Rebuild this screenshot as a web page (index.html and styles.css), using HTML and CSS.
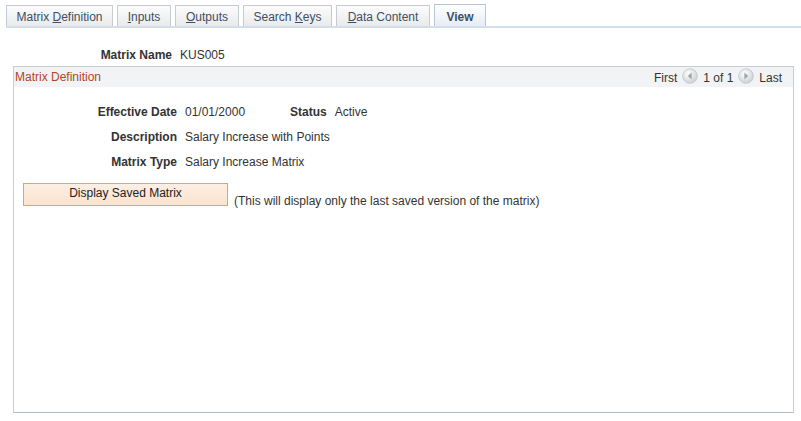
FILE: index.html
```html
<!DOCTYPE html>
<html>
<head>
<meta charset="utf-8">
<link rel="stylesheet" href="styles.css">
</head>
<body>
<div class="tabs">
  <div class="tab t1"><span>Matrix <u>D</u>efinition</span></div>
  <div class="tab t2"><span><u>I</u>nputs</span></div>
  <div class="tab t3"><span><u>O</u>utputs</span></div>
  <div class="tab t4"><span>Search <u>K</u>eys</span></div>
  <div class="tab t5"><span><u>D</u>ata Content</span></div>
  <div class="tab t6 active"><span>View</span></div>
</div>
<div class="tabline"></div>
<div class="namerow">
  <span class="label lbl-name">Matrix Name</span>
  <span class="value">KUS005</span>
</div>
<div class="box">
  <div class="boxhead">
    <span class="boxtitle">Matrix Definition</span>
    <div class="nav">
      <span>First</span>
      <svg class="navicon" width="16" height="16" viewBox="0 0 16 16"><defs><radialGradient id="g1" cx="0.4" cy="0.35" r="0.7"><stop offset="0" stop-color="#ffffff"/><stop offset="1" stop-color="#c9ced4"/></radialGradient></defs><circle cx="8" cy="8" r="7.3" fill="url(#g1)" stroke="#bfc4ca" stroke-width="0.8"/><path d="M9.6 4.6 L5.8 8 L9.6 11.4 Z" fill="#9ea4ab"/></svg>
      <span>1 of 1</span>
      <svg class="navicon" width="16" height="16" viewBox="0 0 16 16"><defs><radialGradient id="g2" cx="0.4" cy="0.35" r="0.7"><stop offset="0" stop-color="#ffffff"/><stop offset="1" stop-color="#c9ced4"/></radialGradient></defs><circle cx="8" cy="8" r="7.3" fill="url(#g2)" stroke="#bfc4ca" stroke-width="0.8"/><path d="M6.4 4.6 L10.2 8 L6.4 11.4 Z" fill="#9ea4ab"/></svg>
      <span>Last</span>
    </div>
  </div>
  <div class="fields">
    <div class="row">
      <span class="label lbl">Effective Date</span>
      <span class="value v1">01/01/2000</span>
      <span class="label">Status</span>
      <span class="value">Active</span>
    </div>
    <div class="row">
      <span class="label lbl">Description</span>
      <span class="value">Salary Increase with Points</span>
    </div>
    <div class="row">
      <span class="label lbl">Matrix Type</span>
      <span class="value">Salary Increase Matrix</span>
    </div>
  </div>
  <div class="btnrow">
    <button class="btn">Display Saved Matrix</button>
    <span class="note">(This will display only the last saved version of the matrix)</span>
  </div>
</div>
</body>
</html>
```
FILE: styles.css
```css
html, body {
  margin: 0;
  padding: 0;
  background: #ffffff;
}
body {
  font-family: "Liberation Sans", Arial, sans-serif;
  font-size: 12px;
  color: #333333;
  width: 801px;
  height: 421px;
  overflow: hidden;
}
.tabs {
  display: flex;
  gap: 4px;
  padding: 5px 0 0 6px;
  height: 21px;
  align-items: flex-end;
}
.tab {
  box-sizing: border-box;
  height: 21px;
  border: 1px solid #c6cbd1;
  border-bottom: none;
  background: linear-gradient(#fcfcfc, #e9eaec);
  color: #3e4f64;
  font-size: 12px;
  display: flex;
  align-items: center;
  justify-content: center;
  white-space: nowrap;
  padding-top: 2px;
}
.t1 { width: 107px; }
.t2 { width: 54px; }
.t3 { width: 64px; }
.t4 { width: 89px; }
.t5 { width: 94px; }
.t6 { width: 52px; }
.tab u {
  text-decoration: underline;
}
.tab.active {
  background: linear-gradient(#ffffff, #e6ecf5);
  border-color: #b8c6d8;
  font-weight: bold;
  color: #3e4f64;
  height: 22px;
}
.tabline {
  margin-left: 6px;
  height: 2px;
  background: #d2dded;
}
.namerow {
  display: flex;
  align-items: center;
  height: 14px;
  margin-top: 20px;
}
.label {
  font-weight: bold;
  color: #333333;
}
.lbl-name {
  text-align: right;
  padding-right: 8px;
  box-sizing: border-box;
  width: 180px;
}
.value {
  color: #333333;
}
.box {
  box-sizing: border-box;
  margin: 4px 0 0 13px;
  width: 781px;
  height: 347px;
  border: 1px solid #c9cdd2;
  border-bottom-color: #b4bccb;
}
.boxhead {
  height: 20px;
  background: #f1f3f5;
  display: flex;
  align-items: center;
  justify-content: space-between;
  padding: 0 11px 0 1px;
}
.boxtitle {
  color: #b0481c;
  font-size: 12px;
}
.nav {
  display: flex;
  align-items: center;
  gap: 5px;
  padding-top: 2px;
  color: #333333;
}
.navicon {
  display: block;
  margin-top: -4px;
}
.fields {
  padding-top: 12px;
}
.row {
  display: flex;
  align-items: center;
  height: 25px;
}
.lbl {
  width: 171px;
  text-align: right;
  padding-right: 8px;
  box-sizing: border-box;
}
.v1 {
  width: 105px;
}
.row .v1 + .label {
  margin-right: 8px;
}
.btnrow {
  display: flex;
  align-items: flex-end;
  padding: 9px 0 0 9px;
}
.btn {
  box-sizing: border-box;
  width: 205px;
  height: 23px;
  border: 1px solid #e0a36f;
  background: linear-gradient(#fcefe3, #fbe3cf);
  font-family: "Liberation Sans", Arial, sans-serif;
  font-size: 12px;
  color: #222222;
  padding: 0 0 4px 0;
  margin: 0;
}
.note {
  margin-left: 6px;
  line-height: 14px;
  margin-bottom: -2px;
}
```
